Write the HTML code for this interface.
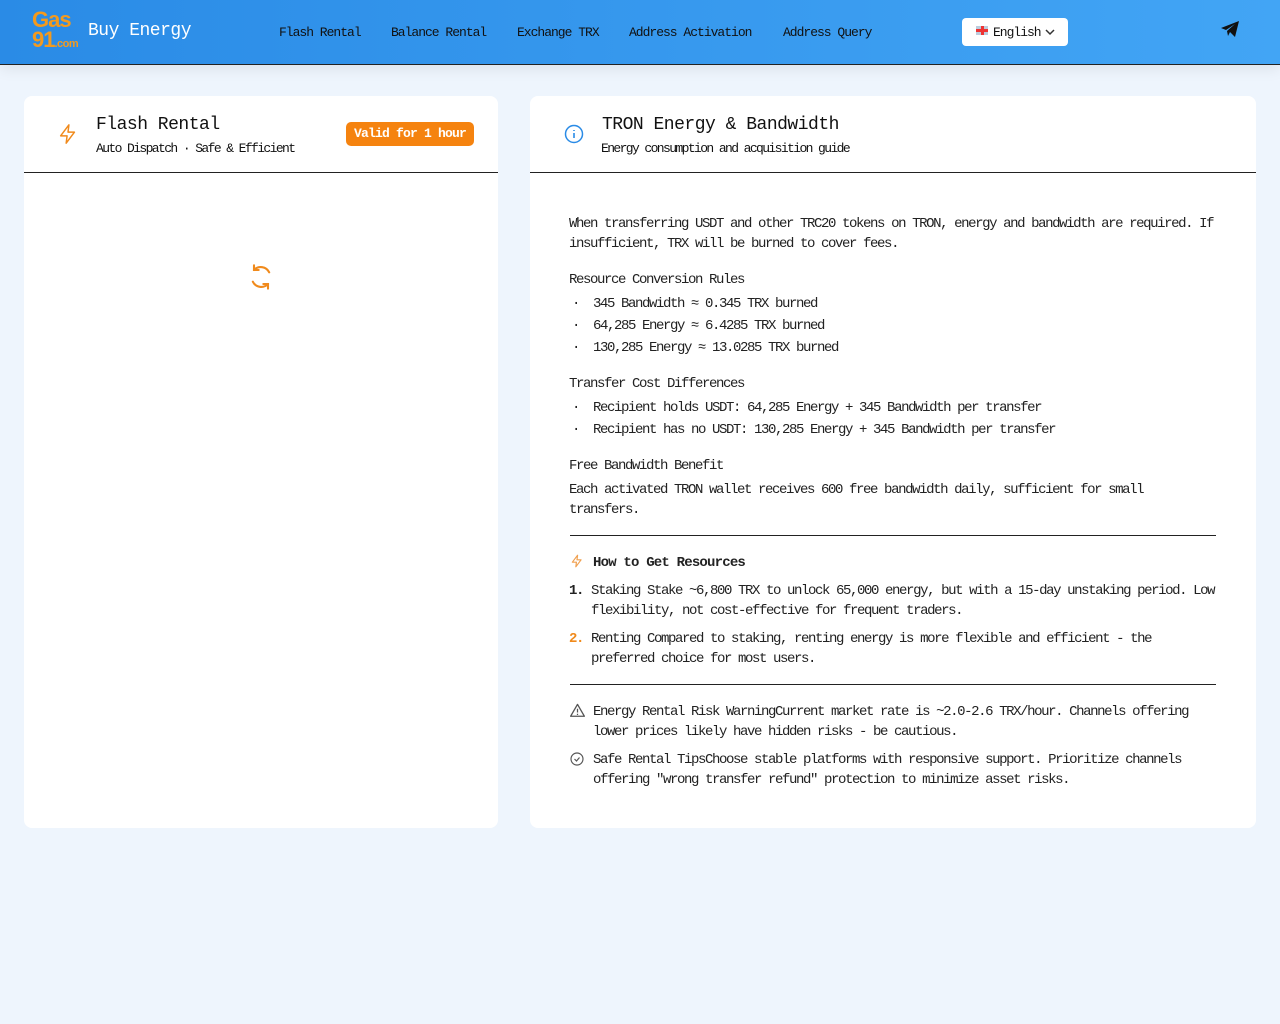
<!DOCTYPE html>
<html><head><meta charset="utf-8"><style>
*{box-sizing:border-box;margin:0;padding:0}
body{width:1280px;height:1024px;background:#eef5fd;font-family:"Liberation Mono","WenQuanYi Zen Hei",monospace;color:#222;position:relative;overflow:hidden}
.hdr{position:absolute;left:0;top:0;width:1280px;height:65px;background:linear-gradient(90deg,#2a8be6,#42a5f5);border-bottom:1px solid #222;box-shadow:0 4px 14px rgba(0,0,0,.08)}
.abs{position:absolute;white-space:nowrap}
.nav{font-size:13px;letter-spacing:-1px;color:#111;top:25px}
.card{position:absolute;background:#fff;border-radius:8px}
.t{font-size:14px;letter-spacing:-1.4px;line-height:20px;color:#222}
.hr{position:absolute;height:1px;background:#222}
</style></head><body>
<div class="hdr">
 <div class="abs" style="left:32px;top:10px;font:bold 22px 'Liberation Sans',sans-serif;color:#f39a1e;line-height:20px;letter-spacing:-1px">Gas<br>91<span style="font-size:11px;letter-spacing:-.5px">.com</span></div>
 <div class="abs" style="left:88px;top:21px;font-size:18px;color:#fff;letter-spacing:-.5px">Buy Energy</div>
 <div class="abs nav" style="left:279px">Flash Rental</div>
 <div class="abs nav" style="left:391px">Balance Rental</div>
 <div class="abs nav" style="left:517px">Exchange TRX</div>
 <div class="abs nav" style="left:629px">Address Activation</div>
 <div class="abs nav" style="left:783px">Address Query</div>
 <div class="abs" style="left:962px;top:18px;width:106px;height:28px;background:#fff;border-radius:4px"></div>
 <div class="abs" style="left:976px;top:26px;width:12px;height:9px;background:linear-gradient(#e33,#e33) center/12px 3px no-repeat,linear-gradient(#e33,#e33) center/3px 9px no-repeat,#bcd"></div>
 <div class="abs nav" style="left:993px;top:25px">English</div>
 <svg class="abs" style="left:1044px;top:27px" width="12" height="10" viewBox="0 0 12 10"><path d="M2 3l4 4 4-4" fill="none" stroke="#333" stroke-width="1.5"/></svg>
 <svg class="abs" style="left:1220px;top:20px" width="20" height="18" viewBox="0 0 20 18"><path d="M1 8L19 1 15 17 10 12 8 16 7 11 15 4 6 10z" fill="#111"/></svg>
</div>

<div class="card" style="left:24px;top:96px;width:474px;height:732px">
 <svg class="abs" style="left:33px;top:27px" width="22" height="22" viewBox="0 0 24 24"><path d="M13 2L4 14h7l-1 8 9-12h-7z" fill="none" stroke="#f08a1c" stroke-width="1.6" stroke-linejoin="round"/></svg>
 <div class="abs" style="left:72px;top:19px;font-size:18px;letter-spacing:-.5px;color:#111">Flash Rental</div>
 <div class="abs" style="left:72px;top:45px;font-size:13px;letter-spacing:-1.6px;color:#111">Auto Dispatch · Safe &amp; Efficient</div>
 <div class="abs" style="left:322px;top:26px;width:128px;height:24px;background:#f5830f;border-radius:5px;color:#fff;font-size:13px;font-weight:bold;letter-spacing:-.8px;text-align:center;line-height:24px">Valid for 1 hour</div>
 <div class="hr" style="left:0;top:76px;width:474px"></div>
 <svg class="abs" style="left:223px;top:167px" width="28" height="28" viewBox="0 0 24 24"><g fill="none" stroke="#f08a1c" stroke-width="1.8" stroke-linecap="round"><path d="M19 8a8 8 0 0 0-13-2M5 16a8 8 0 0 0 13 2"/><path d="M6 2v4h4M18 22v-4h-4"/></g></svg>
</div>

<div class="card" style="left:530px;top:96px;width:726px;height:732px">
 <svg class="abs" style="left:34px;top:28px" width="20" height="20" viewBox="0 0 20 20"><circle cx="10" cy="10" r="8.5" fill="none" stroke="#2a8be6" stroke-width="1.5"/><path d="M10 9v5M10 6v1" stroke="#2a8be6" stroke-width="1.6"/></svg>
 <div class="abs" style="left:72px;top:19px;font-size:18px;letter-spacing:-.5px;color:#111">TRON Energy &amp; Bandwidth</div>
 <div class="abs" style="left:71px;top:45px;font-size:13px;letter-spacing:-1.6px;color:#111">Energy consumption and acquisition guide</div>
 <div class="hr" style="left:0;top:76px;width:726px"></div>
 <div class="abs t" style="left:39px;top:118px">When transferring USDT and other TRC20 tokens on TRON, energy and bandwidth are required. If<br>insufficient, TRX will be burned to cover fees.</div>
 <div class="abs t" style="left:39px;top:174px">Resource Conversion Rules</div>
 <div class="abs t" style="left:42px;top:197px;line-height:22px">·&nbsp; 345 Bandwidth ≈ 0.345 TRX burned<br>·&nbsp; 64,285 Energy ≈ 6.4285 TRX burned<br>·&nbsp; 130,285 Energy ≈ 13.0285 TRX burned</div>
 <div class="abs t" style="left:39px;top:278px">Transfer Cost Differences</div>
 <div class="abs t" style="left:42px;top:301px;line-height:22px">·&nbsp; Recipient holds USDT: 64,285 Energy + 345 Bandwidth per transfer<br>·&nbsp; Recipient has no USDT: 130,285 Energy + 345 Bandwidth per transfer</div>
 <div class="abs t" style="left:39px;top:360px">Free Bandwidth Benefit</div>
 <div class="abs t" style="left:39px;top:384px">Each activated TRON wallet receives 600 free bandwidth daily, sufficient for small<br>transfers.</div>
 <div class="hr" style="left:40px;top:439px;width:646px"></div>
 <svg class="abs" style="left:40px;top:458px" width="14" height="14" viewBox="0 0 24 24"><path d="M13 2L4 14h7l-1 8 9-12h-7z" fill="none" stroke="#f0a050" stroke-width="2" stroke-linejoin="round"/></svg>
 <div class="abs t" style="left:63px;top:457px;font-weight:bold;letter-spacing:-.8px">How to Get Resources</div>
 <div class="abs t" style="left:39px;top:485px;font-weight:bold">1.</div>
 <div class="abs t" style="left:61px;top:485px">Staking Stake ~6,800 TRX to unlock 65,000 energy, but with a 15-day unstaking period. Low<br>flexibility, not cost-effective for frequent traders.</div>
 <div class="abs t" style="left:39px;top:533px;font-weight:bold;color:#f08a1c">2.</div>
 <div class="abs t" style="left:61px;top:533px">Renting Compared to staking, renting energy is more flexible and efficient - the<br>preferred choice for most users.</div>
 <div class="hr" style="left:40px;top:588px;width:646px"></div>
 <svg class="abs" style="left:40px;top:607px" width="15" height="14" viewBox="0 0 24 22"><path d="M12 2L1 21h22z" fill="none" stroke="#555" stroke-width="2" stroke-linejoin="round"/><path d="M12 9v6M12 17v2" stroke="#555" stroke-width="2"/></svg>
 <div class="abs t" style="left:63px;top:606px">Energy Rental Risk WarningCurrent market rate is ~2.0-2.6 TRX/hour. Channels offering<br>lower prices likely have hidden risks - be cautious.</div>
 <svg class="abs" style="left:40px;top:656px" width="14" height="14" viewBox="0 0 14 14"><circle cx="7" cy="7" r="6" fill="none" stroke="#555" stroke-width="1.2"/><path d="M4.5 7l2 2 3-3.5" fill="none" stroke="#555" stroke-width="1.2"/></svg>
 <div class="abs t" style="left:63px;top:654px">Safe Rental TipsChoose stable platforms with responsive support. Prioritize channels<br>offering "wrong transfer refund" protection to minimize asset risks.</div>
</div>
</body></html>
